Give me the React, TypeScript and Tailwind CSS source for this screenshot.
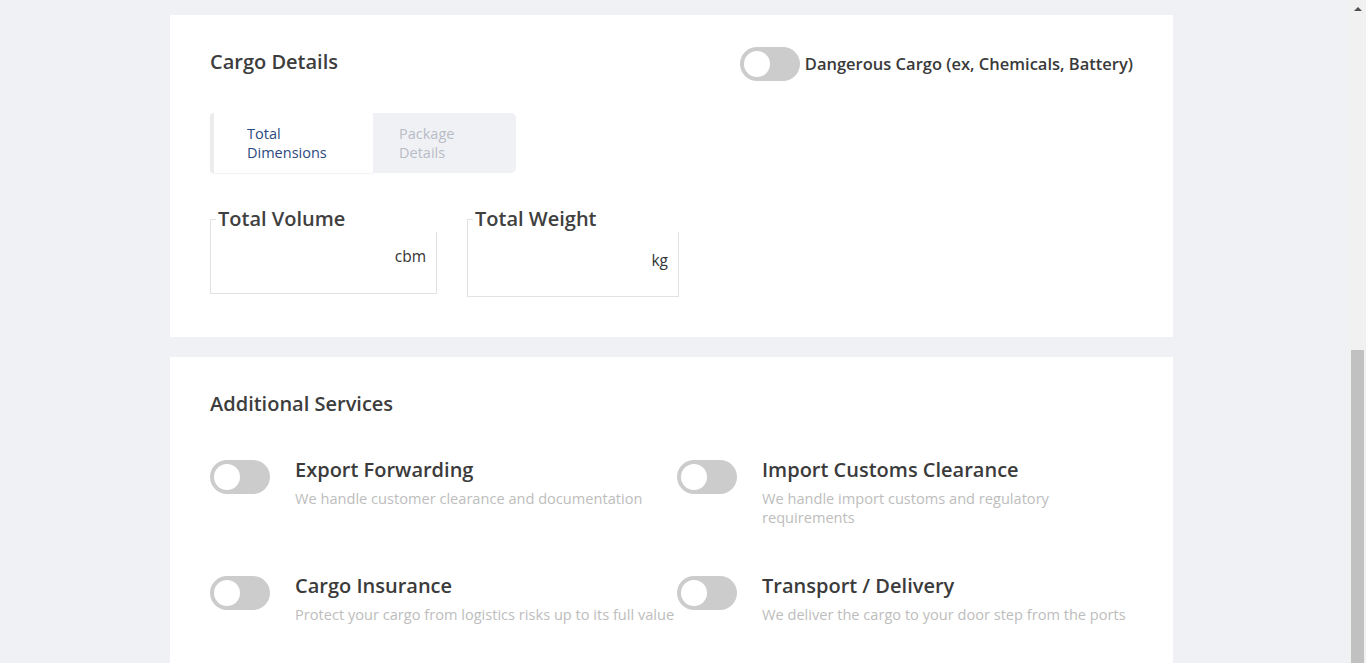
import React from "react";

function Toggle() {
  return (
    <div className="relative h-[34px] w-[60px] shrink-0 rounded-full bg-[#cccccc]">
      <div className="absolute left-[4px] top-[4px] h-[26px] w-[26px] rounded-full bg-white" />
    </div>
  );
}

function Service({ title, desc }: { title: string; desc: string }) {
  return (
    <div className="flex items-start">
      <div className="mt-[3px]">
        <Toggle />
      </div>
      <div className="ml-[25px] flex flex-col">
        <div className="text-[20px] font-semibold leading-[26px] text-[#3b3b3b]">{title}</div>
        <div className="mt-[6px] text-[14.6px] leading-[19px] text-[#bdbdbd]">{desc}</div>
      </div>
    </div>
  );
}

function Field({ label, unit, w, h, unitPad }: { label: string; unit: string; w: string; h: string; unitPad: string }) {
  return (
    <div className={`relative ${w}`}>
      <div className={`mt-[13px] ${h} border border-[#e2e2e2] flex justify-end ${unitPad}`}>
        <span className="text-[15.5px] leading-[20px] text-[#333]">{unit}</span>
      </div>
      <div className="absolute left-[6px] right-[-1px] top-0 h-[26px] bg-white pl-[2px] text-[20px] font-semibold leading-[26px] text-[#404040]">
        {label}
      </div>
    </div>
  );
}

export default function App() {
  return (
    <div
      className="flex h-[663px] w-[1366px] overflow-hidden bg-[#f0f1f5]"
      style={{ fontFamily: '"Open Sans", "Noto Sans", sans-serif' }}
    >
      <main className="flex flex-1 flex-col pl-[170px] pt-[15px]">
        <section className="w-[1003px] bg-white px-[40px] pb-[40px] pt-[32px]">
          <div className="flex items-center justify-between">
            <h2 className="-mt-[4px] text-[20px] font-semibold leading-[26px] text-[#3d3d3d]">Cargo Details</h2>
            <div className="flex items-center">
              <Toggle />
              <span className="ml-[5px] text-[16.5px] font-semibold text-[#3a3a3a]">
                Dangerous Cargo (ex, Chemicals, Battery)
              </span>
            </div>
          </div>

          <div className="mt-[32px] flex h-[60px]">
            <div className="flex w-[163px] items-center rounded-l-[4px] border-l-[4px] border-[#ececec] bg-white pl-[33px] pr-[20px] text-[14.5px] leading-[19px] text-[#2b4a80] shadow-[0_1px_2px_rgba(0,0,0,0.06)]">
              Total Dimensions
            </div>
            <div className="flex w-[143px] items-center rounded-r-[5px] bg-[#f0f1f5] pl-[26px] pr-[40px] text-[14.5px] leading-[19px] text-[#b8bcc6]">
              Package Details
            </div>
          </div>

          <div className="mt-[33px] flex gap-[30px]">
            <Field label="Total Volume" unit="cbm" w="w-[227px]" h="h-[75px]" unitPad="pr-[10px] pt-[26px]" />
            <Field label="Total Weight" unit="kg" w="w-[212px]" h="h-[78px]" unitPad="pr-[10px] pt-[30px]" />
          </div>
        </section>

        <section className="mt-[20px] w-[1003px] flex-1 bg-white px-[40px] pt-[34px]">
          <h2 className="text-[20px] font-semibold leading-[26px] text-[#3d3d3d]">Additional Services</h2>
          <div className="mt-[40px] grid grid-cols-[467px_1fr] gap-y-[46px]">
            <Service title="Export Forwarding" desc="We handle customer clearance and documentation" />
            <Service title="Import Customs Clearance" desc="We handle import customs and regulatory requirements" />
            <Service title="Cargo Insurance" desc="Protect your cargo from logistics risks up to its full value" />
            <Service title="Transport / Delivery" desc="We deliver the cargo to your door step from the ports" />
          </div>
        </section>
      </main>

      <aside className="flex w-[17px] flex-col bg-[#f1f1f1]">
        <div className="flex h-[17px] items-center justify-center">
          <div className="h-0 w-0 border-x-[4px] border-b-[4px] border-x-transparent border-b-[#505050]" />
        </div>
        <div className="h-[333px]" />
        <div className="mx-[2px] flex-1 bg-[#c1c1c1]" />
      </aside>
    </div>
  );
}
